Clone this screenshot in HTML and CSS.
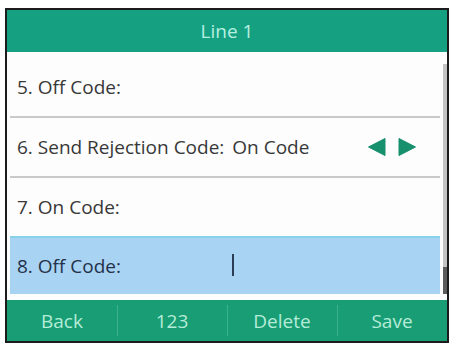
FILE: index.html
```html
<!DOCTYPE html>
<html>
<head>
<meta charset="utf-8">
<link rel="stylesheet" href="styles.css">
</head>
<body>
<div class="screen">
  <div class="header">Line 1</div>
  <div class="content">
    <div class="list">
      <div class="row"><span class="label">5. Off Code:</span></div>
      <div class="row">
        <span class="label">6. Send Rejection Code:</span>
        <span class="value">On Code</span>
        <span class="arrows">
          <svg width="49" height="18" viewBox="0 0 49 18">
            <polygon points="0.5,9 17,0.5 17,17.5" fill="#16906d" stroke="#16906d" stroke-linejoin="round" stroke-width="1"/>
            <polygon points="31,0.5 47.5,9 31,17.5" fill="#16906d" stroke="#16906d" stroke-linejoin="round" stroke-width="1"/>
          </svg>
        </span>
      </div>
      <div class="row"><span class="label">7. On Code:</span></div>
      <div class="row selected"><span class="label">8. Off Code:</span><span class="cursor"></span></div>
    </div>
    <div class="scrollbar"><div class="thumb"></div></div>
  </div>
  <div class="footer">
    <div class="key">Back</div>
    <div class="key">123</div>
    <div class="key">Delete</div>
    <div class="key">Save</div>
  </div>
</div>
</body>
</html>
```
FILE: styles.css
```css
html, body {
  margin: 0;
  padding: 0;
  background: #ffffff;
}
body {
  width: 456px;
  height: 348px;
  padding: 8px 0 0 5px;
  box-sizing: border-box;
  font-family: "Open Sans", "DejaVu Sans", sans-serif;
}
.screen {
  width: 444px;
  height: 335px;
  border: 2px solid #1c1c1c;
  box-sizing: border-box;
  display: flex;
  flex-direction: column;
  background: #fdfdfd;
}
.header {
  height: 42px;
  flex: none;
  background: #15a082;
  color: #b6f1e0;
  font-size: 19px;
  display: flex;
  align-items: center;
  justify-content: center;
}
.content {
  flex: 1;
  display: flex;
  padding: 6px 0 0 3px;
}
.list {
  width: 430px;
  display: flex;
  flex-direction: column;
}
.row {
  height: 58px;
  border-bottom: 2px solid #c9c9c9;
  display: flex;
  align-items: center;
  padding-left: 7px;
  font-size: 19px;
  color: #383838;
  position: relative;
}
.row:nth-child(3) {
  border-bottom: none;
}
.row.selected {
  height: 56px;
  border-top: 2px solid #86d2ea;
  border-bottom: none;
  background: #a9d3f3;
  color: #23324a;
}
.value {
  margin-left: 8px;
}
.arrows {
  margin-left: auto;
  margin-right: 23px;
  display: flex;
}
.cursor {
  position: absolute;
  left: 222px;
  top: 16px;
  width: 2px;
  height: 22px;
  background: #2b3c55;
}
.scrollbar {
  width: 4px;
  margin-left: 3px;
  margin-top: 6px;
  height: 230px;
  background: #c4c4c4;
  display: flex;
  flex-direction: column;
  justify-content: flex-end;
}
.thumb {
  height: 27px;
  background: #5c5c5c;
}
.footer {
  height: 41px;
  flex: none;
  margin-top: 6px;
  background: #189d74;
  display: flex;
}
.key {
  flex: 1;
  display: flex;
  align-items: center;
  justify-content: center;
  color: #b5ecd8;
  font-size: 19px;
  position: relative;
}
.key + .key::before {
  content: "";
  position: absolute;
  left: 0;
  top: 5px;
  bottom: 5px;
  width: 1px;
  background: #3fb08c;
}
```
